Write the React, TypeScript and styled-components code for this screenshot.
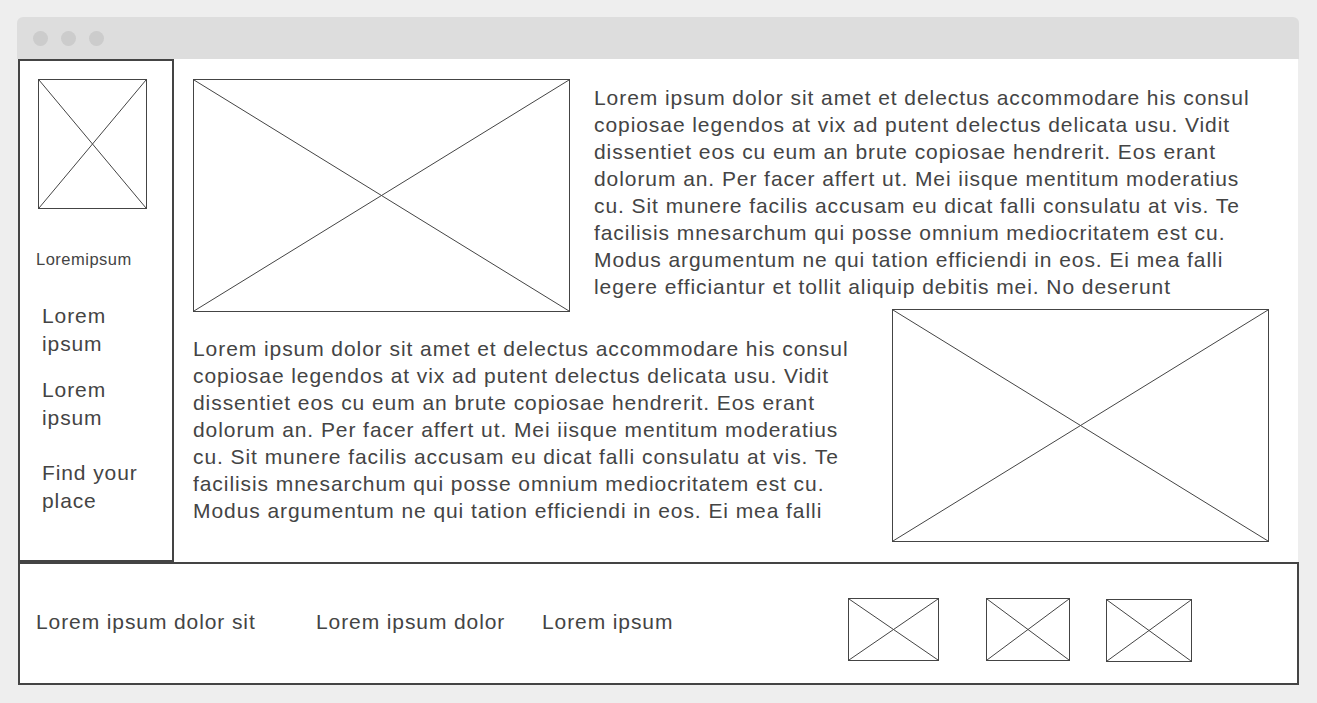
import styled, { createGlobalStyle } from "styled-components";

const GlobalStyle = createGlobalStyle`
  body {
    margin: 0;
    background-color: #eeeeee;
    font-family: "Liberation Sans", Arial, sans-serif;
    color: #444444;
  }
`;

const Window = styled.div`
  margin: 17px 0 0 17px;
  width: 1282px;
`;

const TitleBar = styled.div`
  height: 42px;
  background-color: #dddddd;
  border-radius: 6px 6px 0 0;
  display: flex;
  align-items: center;
  gap: 13px;
  padding-left: 16px;
`;

const Dot = styled.span`
  width: 15px;
  height: 15px;
  border-radius: 50%;
  background-color: #cccccc;
`;

const Body = styled.div`
  margin-left: 1px;
  width: 1280px;
  background-color: #ffffff;
  display: flex;
`;

const Sidebar = styled.aside`
  width: 156px;
  height: 503px;
  border: 2px solid #444444;
  padding-top: 18px;
  box-sizing: border-box;
  display: flex;
  flex-direction: column;
`;

const Logo = styled.div`
  margin-left: 18px;
`;

const Brand = styled.div`
  margin: 40px 0 0 16px;
  font-size: 16.5px;
  line-height: 20px;
  letter-spacing: 0.5px;
`;

const NavItem = styled.div<{ $top: number }>`
  margin: ${(p) => p.$top}px 0 0 22px;
  width: 104px;
  font-size: 21px;
  line-height: 28px;
  letter-spacing: 0.9px;
`;

const Main = styled.main`
  flex: 1;
  display: flex;
  flex-direction: column;
`;

const TopRow = styled.div`
  display: flex;
  gap: 24px;
  padding: 20px 0 0 19px;
`;

const BottomRow = styled.div`
  display: flex;
  justify-content: space-between;
  margin-top: -3px;
  padding: 0 29px 0 19px;
`;

const Copy = styled.p<{ $lines: number; $top: number }>`
  margin: ${(p) => p.$top}px 0 0 0;
  width: 672px;
  font-size: 21px;
  line-height: 27px;
  letter-spacing: 0.93px;
  max-height: ${(p) => p.$lines * 27}px;
  overflow: hidden;
`;

const Frame = styled.div<{ $w: number; $h: number }>`
  width: ${(p) => p.$w}px;
  height: ${(p) => p.$h}px;
  border: 1px solid #444444;
  box-sizing: border-box;
  flex-shrink: 0;

  svg {
    display: block;
    width: 100%;
    height: 100%;
  }
`;

const Footer = styled.footer`
  margin-left: 1px;
  width: 1281px;
  height: 123px;
  border: 2px solid #444444;
  box-sizing: border-box;
  background-color: #ffffff;
  display: flex;
  align-items: center;
  padding-left: 16px;
`;

const FooterLink = styled.div<{ $w: number }>`
  width: ${(p) => p.$w}px;
  flex-shrink: 0;
  white-space: nowrap;
  font-size: 21px;
  letter-spacing: 0.9px;
  margin-top: -3px;
`;

const Thumbs = styled.div`
  display: flex;
  align-items: flex-start;
  margin: 12px 0 0 166px;
`;

const ThumbSlot = styled.div<{ $gap: number; $down: number }>`
  margin-left: ${(p) => p.$gap}px;
  margin-top: ${(p) => p.$down}px;
`;

function Placeholder({ w, h }: { w: number; h: number }) {
  return (
    <Frame $w={w} $h={h}>
      <svg viewBox="0 0 100 100" preserveAspectRatio="none">
        <line x1="0" y1="0" x2="100" y2="100" stroke="#444" strokeWidth="1" vectorEffect="non-scaling-stroke" />
        <line x1="100" y1="0" x2="0" y2="100" stroke="#444" strokeWidth="1" vectorEffect="non-scaling-stroke" />
      </svg>
    </Frame>
  );
}

const firstText =
  "Lorem ipsum dolor sit amet et delectus accommodare his consul copiosae legendos at vix ad putent delectus delicata usu. Vidit dissentiet eos cu eum an brute copiosae hendrerit. Eos erant dolorum an. Per facer affert ut. Mei iisque mentitum moderatius cu. Sit munere facilis accusam eu dicat falli consulatu at vis. Te facilisis mnesarchum qui posse omnium mediocritatem est cu. Modus argumentum ne qui tation efficiendi in eos. Ei mea falli legere efficiantur et tollit aliquip debitis mei. No deserunt";

const secondText =
  "Lorem ipsum dolor sit amet et delectus accommodare his consul copiosae legendos at vix ad putent delectus delicata usu. Vidit dissentiet eos cu eum an brute copiosae hendrerit. Eos erant dolorum an. Per facer affert ut. Mei iisque mentitum moderatius cu. Sit munere facilis accusam eu dicat falli consulatu at vis. Te facilisis mnesarchum qui posse omnium mediocritatem est cu. Modus argumentum ne qui tation efficiendi in eos. Ei mea falli";

export default function App() {
  return (
    <>
      <GlobalStyle />
      <Window>
        <TitleBar>
          <Dot />
          <Dot />
          <Dot />
        </TitleBar>
        <Body>
          <Sidebar>
            <Logo>
              <Placeholder w={109} h={130} />
            </Logo>
            <Brand>Loremipsum</Brand>
            <NavItem $top={33}>Lorem ipsum</NavItem>
            <NavItem $top={18}>Lorem ipsum</NavItem>
            <NavItem $top={27}>Find your place</NavItem>
          </Sidebar>
          <Main>
            <TopRow>
              <Placeholder w={377} h={233} />
              <Copy $lines={8} $top={5}>{firstText}</Copy>
            </TopRow>
            <BottomRow>
              <Copy $lines={7} $top={26}>{secondText}</Copy>
              <Placeholder w={377} h={233} />
            </BottomRow>
          </Main>
        </Body>
        <Footer>
          <FooterLink $w={280}>Lorem ipsum dolor sit</FooterLink>
          <FooterLink $w={226}>Lorem ipsum dolor</FooterLink>
          <FooterLink $w={140}>Lorem ipsum</FooterLink>
          <Thumbs>
            <Placeholder w={91} h={63} />
            <ThumbSlot $gap={47} $down={0}>
              <Placeholder w={84} h={63} />
            </ThumbSlot>
            <ThumbSlot $gap={36} $down={1}>
              <Placeholder w={86} h={63} />
            </ThumbSlot>
          </Thumbs>
        </Footer>
      </Window>
    </>
  );
}
